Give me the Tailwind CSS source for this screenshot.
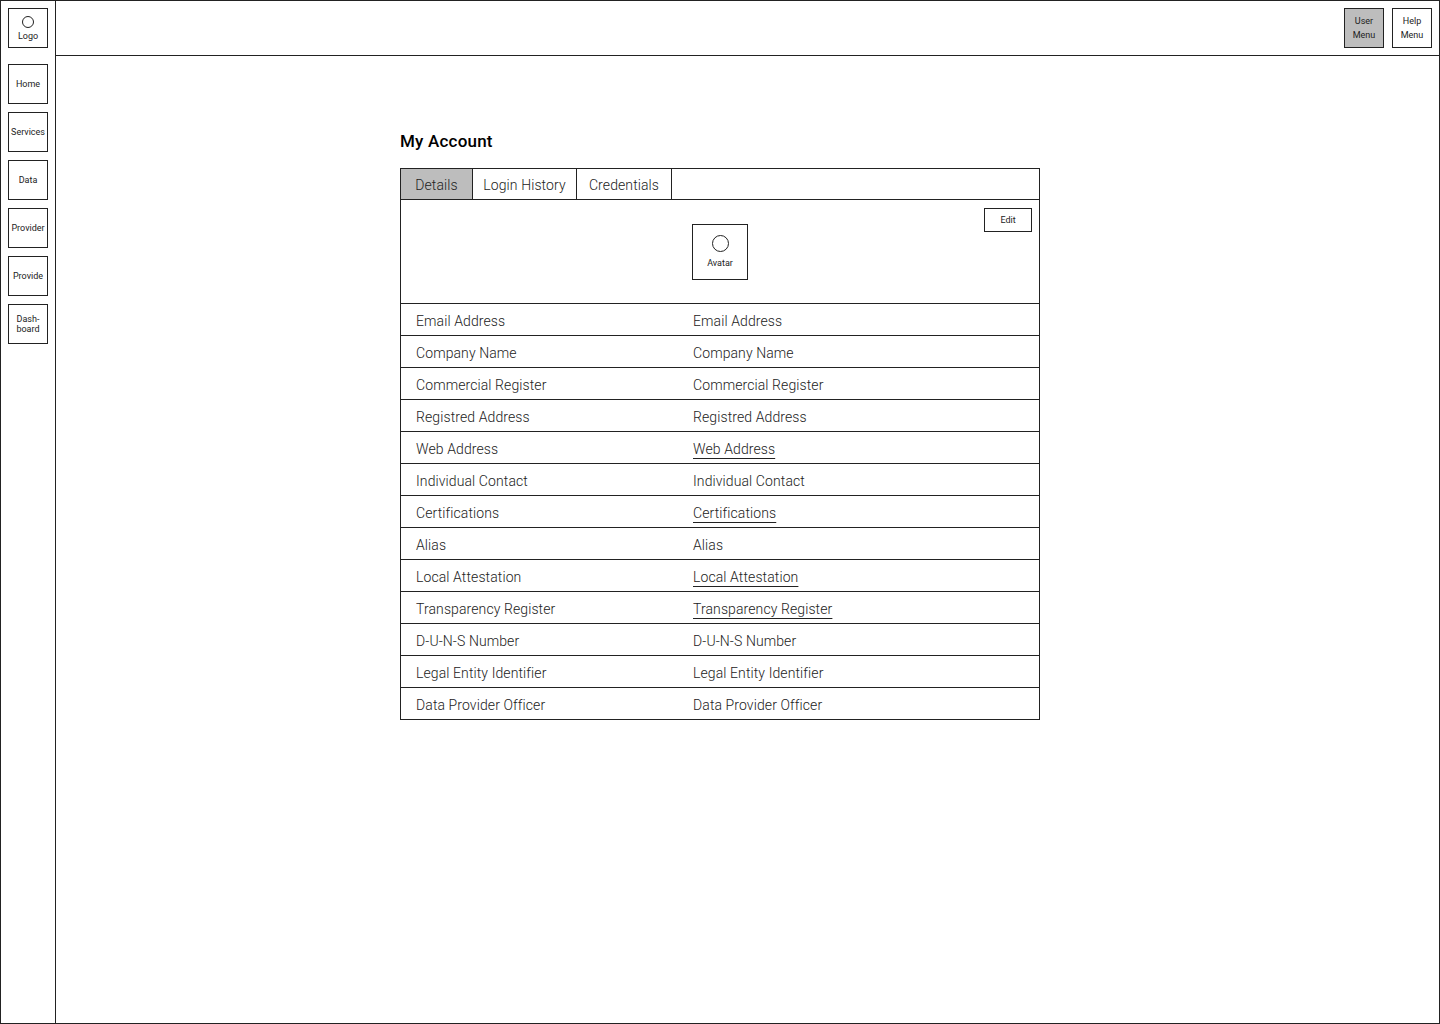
<!DOCTYPE html>
<html lang="en">
<head>
    <meta charset="UTF-8">
    <meta name="viewport" content="width=device-width, initial-scale=1.0">
    <title>My Account</title>
    <script src="https://cdn.jsdelivr.net/npm/@tailwindcss/browser@4"></script>
</head>
<body class="bg-white text-[#222] font-['Roboto',sans-serif]">

<div class="w-[1440px] h-[1024px] border border-[#222] flex overflow-hidden">

    <!-- sidebar -->
    <nav class="w-[55px] shrink-0 border-r border-[#222] pl-[7px] pt-[7px] flex flex-col gap-2 text-[9px] text-center leading-[10px]">
        <div class="w-10 h-10 border border-[#222] flex flex-col items-center pt-[7px]">
            <span class="w-3 h-3 rounded-full border border-[#222]"></span>
            <span class="mt-[3px]">Logo</span>
        </div>
        <div class="mt-2 w-10 h-10 border border-[#222] flex items-center justify-center">Home</div>
        <div class="w-10 h-10 border border-[#222] flex items-center justify-center">Services</div>
        <div class="w-10 h-10 border border-[#222] flex items-center justify-center">Data</div>
        <div class="w-10 h-10 border border-[#222] flex items-center justify-center">Provider</div>
        <div class="w-10 h-10 border border-[#222] flex items-center justify-center">Provide</div>
        <div class="w-10 h-10 border border-[#222] flex items-center justify-center">Dash-<br>board</div>
    </nav>

    <div class="flex-1 flex flex-col">
        <!-- top bar -->
        <header class="h-[55px] shrink-0 border-b border-[#222] flex justify-end gap-2 pt-[7px] pr-[7px] text-[9px] text-center leading-[14px]">
            <div class="w-10 h-10 border border-[#222] bg-[#bdbdbd] flex items-center justify-center">User<br>Menu</div>
            <div class="w-10 h-10 border border-[#222] flex items-center justify-center">Help<br>Menu</div>
        </header>

        <!-- content -->
        <main class="pl-[344px] pt-[75px]">
            <h1 class="h-[37px] text-[17px] leading-[20px] font-medium tracking-[0.2px] text-black">My Account</h1>

            <div class="w-[640px] border border-[#222] text-[14px] font-light tracking-[0.1px]">
                <div class="h-[31px] flex border-b border-[#222] leading-[32px] text-center">
                    <div class="w-[72px] border-r border-[#222] bg-[#bdbdbd]">Details</div>
                    <div class="w-[104px] border-r border-[#222]">Login History</div>
                    <div class="w-[95px] border-r border-[#222]">Credentials</div>
                </div>

                <div class="h-[104px] relative border-b border-[#222] font-normal tracking-normal">
                    <div class="absolute left-[291px] top-6 w-14 h-14 border border-[#222] flex flex-col items-center pt-[10px] text-[9px] leading-[10px]">
                        <span class="w-[17px] h-[17px] rounded-full border border-[#222]"></span>
                        <span class="mt-[6px]">Avatar</span>
                    </div>
                    <button class="absolute right-[7px] top-2 w-12 h-6 border border-[#222] flex items-center justify-center text-[9px] leading-[10px]">Edit</button>
                </div>

                <div class="h-8 flex border-b border-[#222] leading-[34px]"><span class="w-[292px] pl-[15px]">Email Address</span><span>Email Address</span></div>
                <div class="h-8 flex border-b border-[#222] leading-[34px]"><span class="w-[292px] pl-[15px]">Company Name</span><span>Company Name</span></div>
                <div class="h-8 flex border-b border-[#222] leading-[34px]"><span class="w-[292px] pl-[15px]">Commercial Register</span><span>Commercial Register</span></div>
                <div class="h-8 flex border-b border-[#222] leading-[34px]"><span class="w-[292px] pl-[15px]">Registred Address</span><span>Registred Address</span></div>
                <div class="h-8 flex border-b border-[#222] leading-[34px]"><span class="w-[292px] pl-[15px]">Web Address</span><span class="underline underline-offset-[4px] decoration-1">Web Address</span></div>
                <div class="h-8 flex border-b border-[#222] leading-[34px]"><span class="w-[292px] pl-[15px]">Individual Contact</span><span>Individual Contact</span></div>
                <div class="h-8 flex border-b border-[#222] leading-[34px]"><span class="w-[292px] pl-[15px]">Certifications</span><span class="underline underline-offset-[4px] decoration-1">Certifications</span></div>
                <div class="h-8 flex border-b border-[#222] leading-[34px]"><span class="w-[292px] pl-[15px]">Alias</span><span>Alias</span></div>
                <div class="h-8 flex border-b border-[#222] leading-[34px]"><span class="w-[292px] pl-[15px]">Local Attestation</span><span class="underline underline-offset-[4px] decoration-1">Local Attestation</span></div>
                <div class="h-8 flex border-b border-[#222] leading-[34px]"><span class="w-[292px] pl-[15px]">Transparency Register</span><span class="underline underline-offset-[4px] decoration-1">Transparency Register</span></div>
                <div class="h-8 flex border-b border-[#222] leading-[34px]"><span class="w-[292px] pl-[15px]">D-U-N-S Number</span><span>D-U-N-S Number</span></div>
                <div class="h-8 flex border-b border-[#222] leading-[34px]"><span class="w-[292px] pl-[15px]">Legal Entity Identifier</span><span>Legal Entity Identifier</span></div>
                <div class="h-[31px] flex leading-[34px]"><span class="w-[292px] pl-[15px]">Data Provider Officer</span><span>Data Provider Officer</span></div>
            </div>
        </main>
    </div>
</div>

</body>
</html>
